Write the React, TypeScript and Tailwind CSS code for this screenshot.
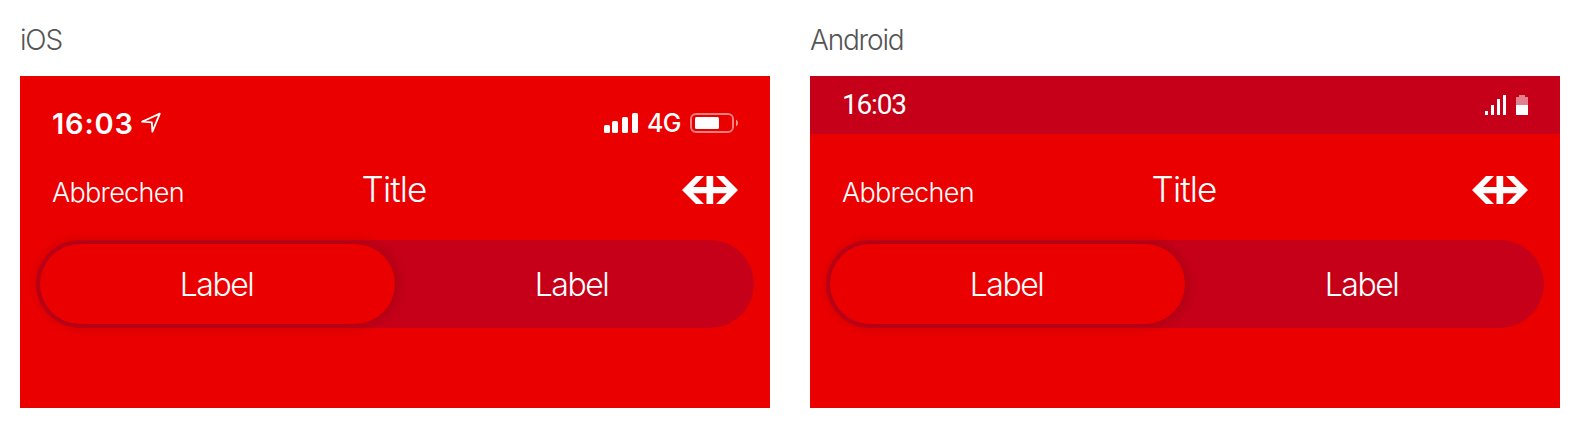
import type { ReactNode } from "react";

function SbbLogo() {
  return (
    <svg width="56" height="28" viewBox="0 0 56 28" fill="#fff">
      <path d="M14 0H22L11.2 11H24.5V0H31.2V11H44.8L34 0H42L56 14L42 28H34L44.8 17.2H31.2V28H24.5V17.2H11.2L22 28H14L0 14Z" />
    </svg>
  );
}

function LocationArrow() {
  return (
    <svg width="22" height="22" viewBox="0 0 22 22" fill="none" stroke="#fff" strokeWidth="1.8">
      <path d="M19.8 1.6L2 9.7L11.8 10.4L12.4 19.6Z" strokeLinejoin="round" />
    </svg>
  );
}

function IosSignal() {
  return (
    <svg width="34" height="20" viewBox="0 0 34 20" fill="#fff">
      <rect x="0" y="12" width="6" height="8" rx="1.5" />
      <rect x="8" y="8" width="6" height="12" rx="1.5" />
      <rect x="18" y="4" width="6" height="16" rx="1.5" />
      <rect x="28" y="0" width="6" height="20" rx="1.5" />
    </svg>
  );
}

function IosBattery() {
  return (
    <svg width="48" height="20" viewBox="0 0 48 20" fill="#fff">
      <rect x="1" y="1" width="42" height="18" rx="5" fill="none" stroke="#fff" strokeWidth="2" opacity=".5" />
      <rect x="5" y="4" width="24" height="12" rx="1.5" />
      <path d="M46 6.5Q48 7.5 48 10T46 13.5Z" opacity=".6" />
    </svg>
  );
}

function AndroidSignal() {
  return (
    <svg width="21" height="20" viewBox="0 0 21 20" fill="#fff">
      <path d="M0 16H3V20H0ZM6 10H9V20H6ZM12 4H15V20H12ZM18 0H21V20H18Z" />
    </svg>
  );
}

function AndroidBattery() {
  return (
    <svg width="12" height="20" viewBox="0 0 12 20" fill="#fff">
      <path d="M3 0H9V2H12V10H0V2H3Z" opacity=".5" />
      <path d="M0 10H12V20H0Z" />
    </svg>
  );
}

function IosStatusBar() {
  return (
    <div className="flex h-[58px] items-start justify-between px-8 pt-[37px] text-white">
      <div className="flex h-5 items-center">
        <span className="w-[88px] text-[29px] font-semibold leading-none tracking-[0.8px]">16:03</span>
        <LocationArrow />
      </div>
      <div className="flex h-5 items-center">
        <IosSignal />
        <span className="ml-[9px] w-[43px] text-[25px] font-medium leading-none tracking-[-0.6px]">4G</span>
        <IosBattery />
      </div>
    </div>
  );
}

function AndroidStatusBar() {
  return (
    <div className="flex h-[58px] items-start justify-between bg-[#c60018] px-8 pt-[19px] text-white">
      <span className="flex h-5 items-center font-['Roboto',sans-serif] text-[28px] leading-none tracking-[-1.2px]">16:03</span>
      <div className="flex gap-[10px]">
        <AndroidSignal />
        <AndroidBattery />
      </div>
    </div>
  );
}

function NavBar() {
  return (
    <div className="grid h-[106px] grid-cols-3 items-start px-8 pt-[42px] text-white">
      <span className="flex h-7 items-center pt-1 text-[27px] font-light leading-none tracking-[-0.7px]">Abbrechen</span>
      <span className="flex h-7 items-center justify-center pr-[2px] pb-[2px] text-[35px] font-light leading-none tracking-[-0.9px]">Title</span>
      <div className="flex justify-end">
        <SbbLogo />
      </div>
    </div>
  );
}

function Segmented() {
  return (
    <div className="mx-4 grid h-[88px] grid-cols-2 rounded-full bg-[#c60018] p-1 text-[32px] font-light leading-none tracking-[-1.5px] text-white">
      <div className="flex items-center justify-center rounded-full bg-[#eb0000] pt-[2px] pr-[2px] shadow-[0_0_16px_rgba(0,0,0,0.2)]">Label</div>
      <div className="flex items-center justify-center pt-[2px] pr-[2px]">Label</div>
    </div>
  );
}

function Preview({ name, children }: { name: string; children: ReactNode }) {
  return (
    <section className="w-[750px]">
      <h2 className="flex h-14 items-center pb-4 text-[28px] font-light leading-none tracking-[-1.2px] text-[#555]">{name}</h2>
      <div className="h-[332px] bg-[#eb0000]">
        {children}
        <NavBar />
        <Segmented />
      </div>
    </section>
  );
}

export default function App() {
  return (
    <main className="flex h-[428px] gap-10 bg-white px-5 pt-5 pb-5 font-['Inter',sans-serif]">
      <Preview name="iOS">
        <IosStatusBar />
      </Preview>
      <Preview name="Android">
        <AndroidStatusBar />
      </Preview>
    </main>
  );
}
